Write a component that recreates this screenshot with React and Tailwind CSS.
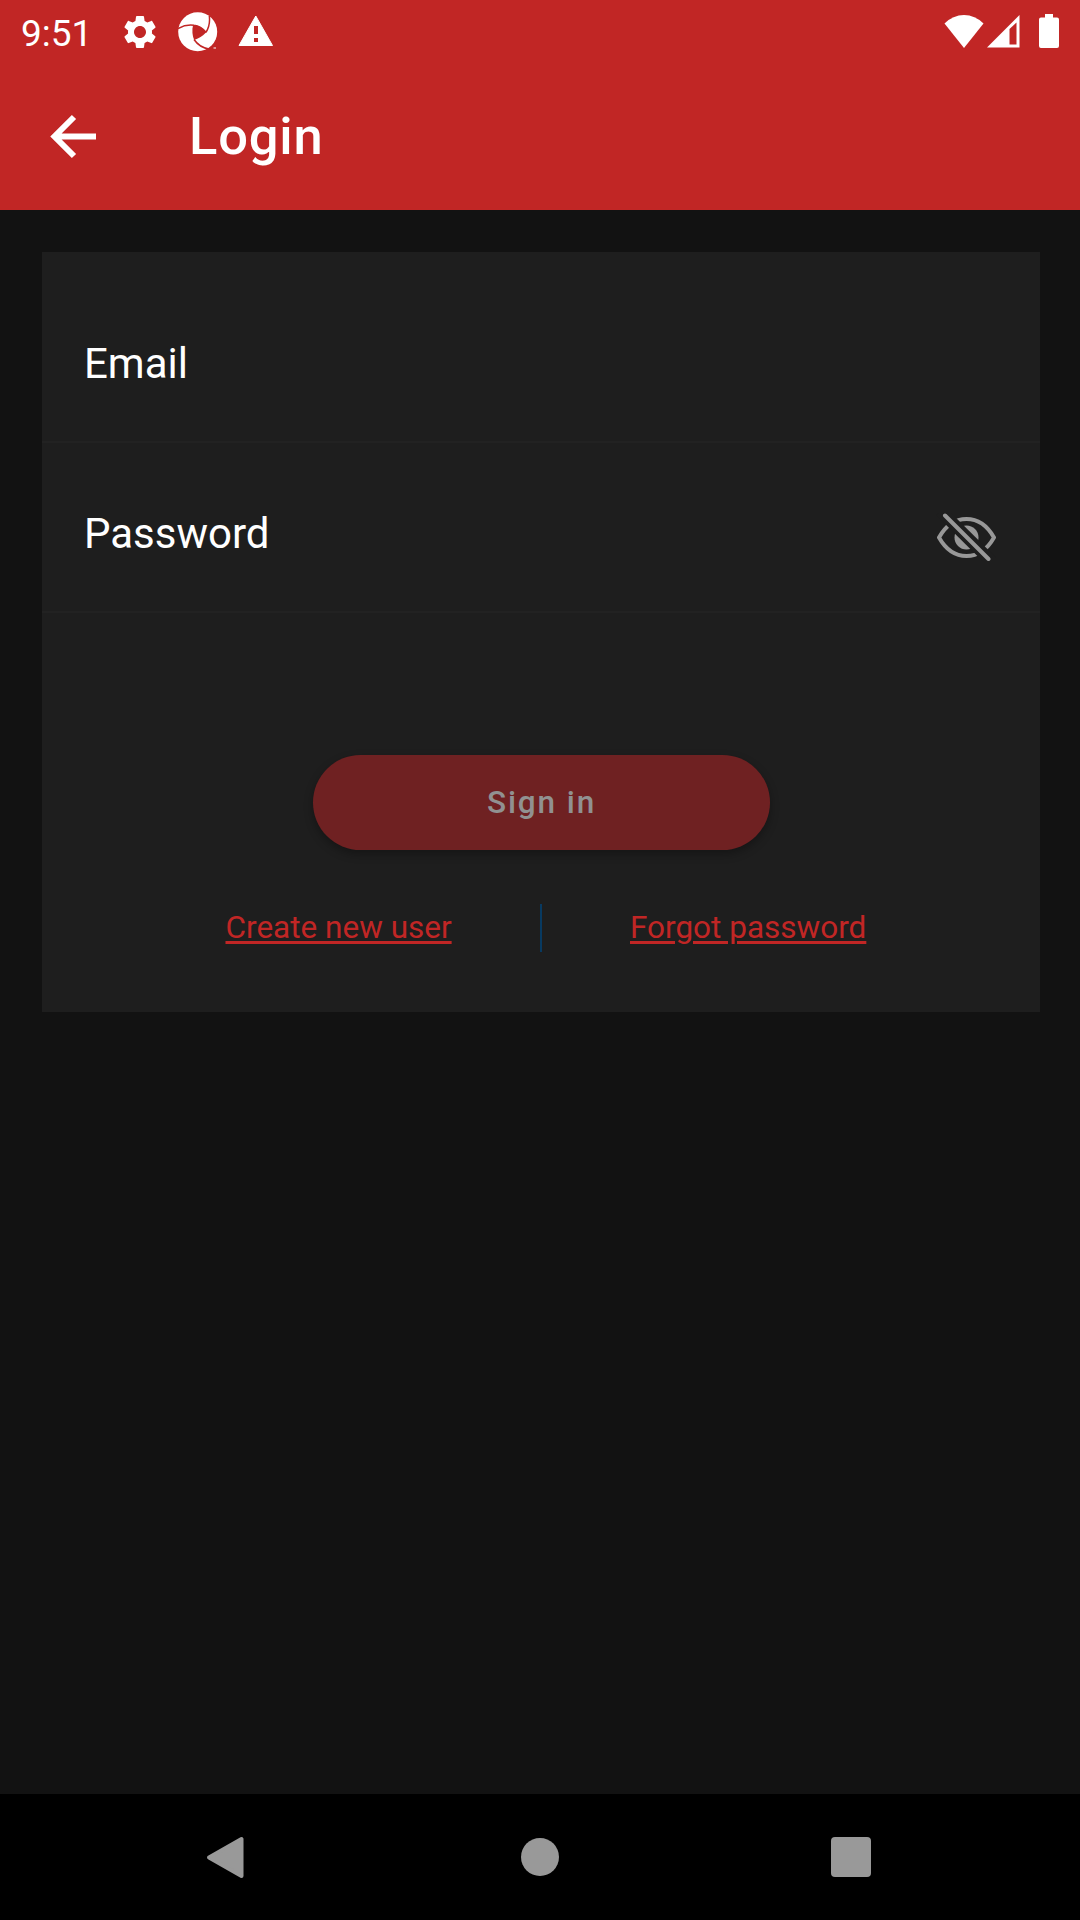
function StatusBar() {
  return (
    <div className="flex h-[63px] items-center text-white">
      <span className="ml-[21px] mt-[3px] w-[72px] whitespace-nowrap text-[37px] leading-none">9:51</span>
      <svg className="ml-[27px] size-[40px]" viewBox="0 0 24 24" fill="currentColor">
        <path d="M19.14 12.94c.04-.3.06-.61.06-.94 0-.32-.02-.64-.07-.94l2.03-1.58c.18-.14.23-.41.12-.61l-1.92-3.32c-.12-.22-.37-.29-.59-.22l-2.39.96c-.5-.38-1.03-.7-1.62-.94l-.36-2.54c-.04-.24-.24-.41-.48-.41h-3.84c-.24 0-.43.17-.47.41l-.36 2.54c-.59.24-1.13.57-1.62.94l-2.39-.96c-.22-.08-.47 0-.59.22L2.74 8.87c-.12.21-.08.47.12.61l2.03 1.58c-.05.3-.09.63-.09.94s.02.64.07.94l-2.03 1.58c-.18.14-.23.41-.12.61l1.92 3.32c.12.22.37.29.59.22l2.39-.96c.5.38 1.03.7 1.62.94l.36 2.54c.05.24.24.41.48.41h3.84c.24 0 .44-.17.47-.41l.36-2.54c.59-.24 1.13-.56 1.62-.94l2.39.96c.22.08.47 0 .59-.22l1.92-3.32c.12-.22.07-.47-.12-.61l-2.01-1.58zM12 15.6c-1.98 0-3.6-1.62-3.6-3.6s1.62-3.6 3.6-3.6 3.6 1.62 3.6 3.6-1.62 3.6-3.6 3.6z" />
      </svg>
      <svg className="ml-[18px] size-[40px]" viewBox="0 0 40 40">
        <circle cx="19.700" cy="19.700" r="19.500" fill="#fff" />
        <path d="M15 13.200Q23 13.200 28.300 20.300Q23.500 25.500 16.300 28Q13.200 21 15 13.200Z" fill="#c12625" />
        <path d="M0 16.500Q8 12 16 13.200Q23 14 28 20.300M31.300 4Q32.500 13 28 20.300M16 27.500Q21.500 35.500 31 37" fill="none" stroke="#c12625" strokeWidth="1.500" />
        <path d="M35.500 35.500h2.500v1h-2.500z" fill="#fff" />
      </svg>
      <svg className="mb-[1px] ml-[20px] h-[32px] w-[36px]" viewBox="0 0 36 32">
        <path d="M17.800 1 34.500 30.500H1Z" fill="currentColor" stroke="currentColor" strokeLinejoin="round" />
        <path d="M16 11h4v8h-4zM16 23h4v4h-4z" fill="#c12625" />
      </svg>
      <div className="mb-[1px] ml-auto mr-[21px] flex items-center">
        <svg className="h-[34px] w-[40px]" viewBox="0 0 40 34" fill="currentColor">
          <path d="M.5 9.500Q9 1 20 1T39.500 9.500L20 34Z" />
        </svg>
        <svg className="ml-[3px] h-[34px] w-[33px]" viewBox="0 0 33 34">
          <path d="M0 33.500 32.500 1V33.500Z" fill="currentColor" />
          <path d="M22.500 15 29.500 8.500V30.500H22.500Z" fill="#c12625" />
        </svg>
        <svg className="ml-[19px] h-[34px] w-[20px]" viewBox="0 0 20 34" fill="currentColor">
          <path d="M6 0h8v3.500h4q2 0 2 2V32q0 2-2 2H2q-2 0-2-2V5.500q0-2 2-2h4z" />
        </svg>
      </div>
    </div>
  );
}

function AppBar() {
  return (
    <div className="flex h-[147px] items-center text-white">
      <svg className="ml-[50px] h-[45px] w-[47px]" viewBox="0 0 47 45" fill="none" stroke="currentColor" strokeWidth="6">
        <path d="M46 22.500H5M24 3 4.500 22.500 24 42" />
      </svg>
      <h1 className="ml-[92px] text-[52.5px] font-medium leading-none tracking-[0.8px]">Login</h1>
    </div>
  );
}

function EyeOff() {
  return (
    <svg className="h-[48px] w-[60px]" viewBox="0 0 60 48" fill="none" stroke="#989898" strokeWidth="4" strokeLinejoin="round">
      <circle cx="30.500" cy="24.500" r="12" fill="#989898" stroke="none" />
      <path d="M3 24.500Q13.500 6 30.500 6T58 24.500Q47.500 43 30.500 43T3 24.500Z" />
      <path d="M4.500-2 58.500 51.500" stroke="#1e1e1e" strokeWidth="12" />
      <path d="M9 2.500 52.500 46" strokeLinecap="round" />
    </svg>
  );
}

function Field({ label, children }) {
  return (
    <div className="flex h-[170px] items-center border-b-2 border-[#222222] pl-[42px] pr-[44px]">
      <span className="mt-[14px] grow text-[42px] leading-[50px]">{label}</span>
      {children}
    </div>
  );
}

export default function App() {
  return (
    <div className="flex h-[1920px] w-[1080px] flex-col bg-[#121212] font-['Roboto',sans-serif] text-white">
      <header className="h-[210px] bg-[#c12625]">
        <StatusBar />
        <AppBar />
      </header>
      <main className="grow pl-[42px] pr-[40px] pt-[42px]">
        <div className="h-[760px] bg-[#1e1e1e] pt-[21px]">
          <Field label="Email" />
          <Field label="Password">
            <div className="mt-[20px]"><EyeOff /></div>
          </Field>
          <button className="ml-[271px] mt-[142px] flex h-[95px] w-[457px] items-center justify-center rounded-full bg-[#6f2122] text-[31.5px] font-medium tracking-[1.9px] text-[#919191] shadow-[0_4px_10px_rgba(0,0,0,0.3)]">
            Sign in
          </button>
          <div className="mt-[54px] flex h-[48px] items-center text-[31.5px] leading-[37px] text-[#c12625]">
            <div className="mb-[2px] flex w-[498px] pl-[183.5px]"><a className="whitespace-nowrap underline decoration-[3px] underline-offset-[3px]">Create new user</a></div>
            <div className="h-[48px] w-[2px] bg-[#083a61]" />
            <div className="mb-[2px] flex pl-[88px]"><a className="whitespace-nowrap underline decoration-[3px] underline-offset-[3px]">Forgot password</a></div>
          </div>
        </div>
      </main>
      <nav className="flex h-[126px] items-center bg-black pl-[206px]">
        <svg className="h-[43px] w-[38px]" viewBox="0 0 38 43">
          <path d="M3 21.500 35.500 3V40Z" fill="#999" stroke="#999" strokeWidth="4" strokeLinejoin="round" />
        </svg>
        <div className="ml-[277px] size-[38px] rounded-full bg-[#999999]" />
        <div className="ml-[272px] size-[40px] rounded-[4px] bg-[#999999]" />
      </nav>
    </div>
  );
}
